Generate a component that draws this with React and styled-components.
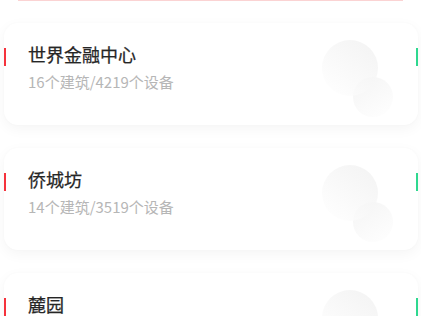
import React from "react";
import styled, { createGlobalStyle } from "styled-components";

const GlobalStyle = createGlobalStyle`
  html, body {
    margin: 0;
    padding: 0;
    background: #ffffff;
    overflow: hidden;
  }
  body {
    font-family: "Noto Sans CJK SC", "Noto Sans", sans-serif;
  }
`;

const Page = styled.div`
  width: 421px;
  height: 316px;
  padding: 0 3px 0 4px;
  box-sizing: border-box;
  overflow: hidden;
`;

const TopLine = styled.div`
  height: 1px;
  margin: 0 15px 0 14px;
  background: #fbd3d3;
`;

const List = styled.div`
  display: flex;
  flex-direction: column;
  gap: 23px;
  padding-top: 22px;
`;

const Card = styled.div`
  display: flex;
  align-items: flex-start;
  height: 102px;
  background: #ffffff;
  border-radius: 14px;
  box-shadow: 0 4px 14px rgba(0, 0, 0, 0.045), 0 0 3px rgba(0, 0, 0, 0.02);
  overflow: hidden;
`;

const Bar = styled.div`
  flex: none;
  width: 2px;
  height: 18px;
  margin-top: 25px;
  background: ${(p) => p.color};
`;

const Info = styled.div`
  flex: 1;
  padding: 18px 0 0 22px;
`;

const Name = styled.div`
  font-size: 18px;
  font-weight: 400;
  color: #262626;
  line-height: 26px;
  -webkit-text-stroke: 0.25px #262626;
`;

const Meta = styled.div`
  margin-top: 5px;
  font-size: 15px;
  color: #b6b6b6;
  line-height: 20px;
`;

const Deco = styled.svg`
  flex: none;
  margin: 17px 20px 0 0;
`;

const Bubbles = ({ id }) => (
  <Deco width="74" height="80" viewBox="0 0 74 80">
    <defs>
      <linearGradient id={`g1${id}`} x1="0.8" y1="0.1" x2="0.2" y2="0.9">
        <stop offset="0" stopColor="#f2f2f2" />
        <stop offset="1" stopColor="#fdfdfd" />
      </linearGradient>
      <linearGradient id={`g2${id}`} x1="0.2" y1="0" x2="0.8" y2="1">
        <stop offset="0" stopColor="#f5f5f5" />
        <stop offset="1" stopColor="#fefefe" />
      </linearGradient>
    </defs>
    <circle cx="51" cy="57" r="20" fill={`url(#g2${id})`} />
    <circle cx="28" cy="28" r="28" fill={`url(#g1${id})`} opacity="0.8" />
  </Deco>
);

const places = [
  { name: "世界金融中心", meta: "16个建筑/4219个设备" },
  { name: "侨城坊", meta: "14个建筑/3519个设备" },
  { name: "麓园", meta: "12个建筑/2860个设备" },
];

export default function App() {
  return (
    <Page>
      <GlobalStyle />
      <TopLine />
      <List>
        {places.map((p, i) => (
          <Card key={p.name}>
            <Bar color="#f5323c" />
            <Info>
              <Name>{p.name}</Name>
              <Meta>{p.meta}</Meta>
            </Info>
            <Bubbles id={i} />
            <Bar color="#2ed88f" />
          </Card>
        ))}
      </List>
    </Page>
  );
}
